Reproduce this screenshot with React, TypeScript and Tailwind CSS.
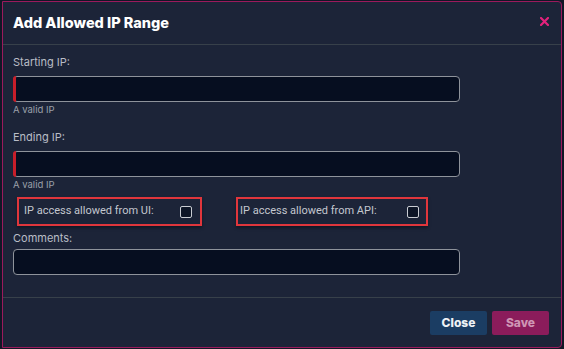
import React from "react";

const font = { fontFamily: "Inter, 'Noto Sans', 'Liberation Sans', sans-serif" };
const roboto = { fontFamily: "Roboto, 'Liberation Sans', sans-serif" };

function Input() {
  return (
    <div className="relative h-[26px] w-[447px] rounded-[4px] border border-[#8e939b] bg-[#060e20]">
      <div className="absolute left-[-1px] top-[-1px] bottom-[-1px] w-[3px] rounded-l-[4px] bg-[#c81e2a]" />
    </div>
  );
}

function Check() {
  return <div className="h-[12px] w-[12px] rounded-[2px] border-[1.5px] border-[#c9ccd2] bg-[#0d1526]" />;
}

export default function App() {
  return (
    <div className="h-[349px] w-[564px] bg-[#111726] pl-[2px] pt-[1px]" style={font}>
      <div className="flex h-[347px] w-[560px] flex-col rounded-r-[4px] border border-[#9b1a5c] bg-[#1c2438]">
        <div className="flex h-[42px] items-center justify-between pl-[10px] pr-[12px]">
          <div className="text-[14.5px] font-extrabold leading-none text-white">Add Allowed IP Range</div>
          <svg width="9" height="9" viewBox="0 0 9 9" className="mt-[-4px]">
            <path d="M1 1 L8 8 M8 1 L1 8" stroke="#e3227c" strokeWidth="2.2" strokeLinecap="square" />
          </svg>
        </div>
        <div className="h-px bg-[#37404a]" />
        <div className="flex h-[252px] flex-col pl-[10px] text-[#b9bdc6]">
          <div className="mt-[10px] h-[14px] text-[11px] leading-[14px]">Starting IP:</div>
          <div className="mt-[7px]"><Input /></div>
          <div className="mt-[1px] h-[14px] text-[9.5px] leading-[14px] text-[#9aa0aa]">A valid IP</div>
          <div className="mt-[13px] h-[14px] text-[11px] leading-[14px]">Ending IP:</div>
          <div className="mt-[7px]"><Input /></div>
          <div className="mt-[1px] h-[14px] text-[9.5px] leading-[14px] text-[#9aa0aa]">A valid IP</div>
          <div className="mt-[5px] flex h-[29px] items-center">
            <div className="ml-[4px] flex h-[29px] w-[185px] items-center justify-between border-2 border-[#e0363c] pl-[5px] pr-[8px] shadow-[0_2px_3px_rgba(0,0,0,0.35)]">
              <span className="text-[11px] text-[#c3c7cf]" style={roboto}>IP access allowed from UI:</span>
              <Check />
            </div>
            <div className="ml-[34px] flex h-[29px] w-[192px] items-center justify-between border-2 border-[#e0363c] pl-[2px] pr-[7px] shadow-[0_2px_3px_rgba(0,0,0,0.35)]">
              <span className="text-[11px] text-[#c3c7cf]" style={roboto}>IP access allowed from API:</span>
              <Check />
            </div>
          </div>
          <div className="mt-[5px] h-[14px] text-[11px] leading-[14px]">Comments:</div>
          <div className="mt-[4px] h-[26px] w-[447px] rounded-[4px] border border-[#8e939b] bg-[#060e20]" />
        </div>
        <div className="h-px bg-[#37404a]" />
        <div className="flex flex-1 items-start justify-end gap-[5px] pr-[12px] pt-[13px]">
          <button className="h-[24px] w-[57px] rounded-[2px] bg-[#1b3d63] text-[12px] font-extrabold text-[#eef1f5]">Close</button>
          <button className="h-[24px] w-[57px] rounded-[2px] bg-[#8b1c5b] text-[12px] font-extrabold text-[#cf95b4]">Save</button>
        </div>
      </div>
    </div>
  );
}
